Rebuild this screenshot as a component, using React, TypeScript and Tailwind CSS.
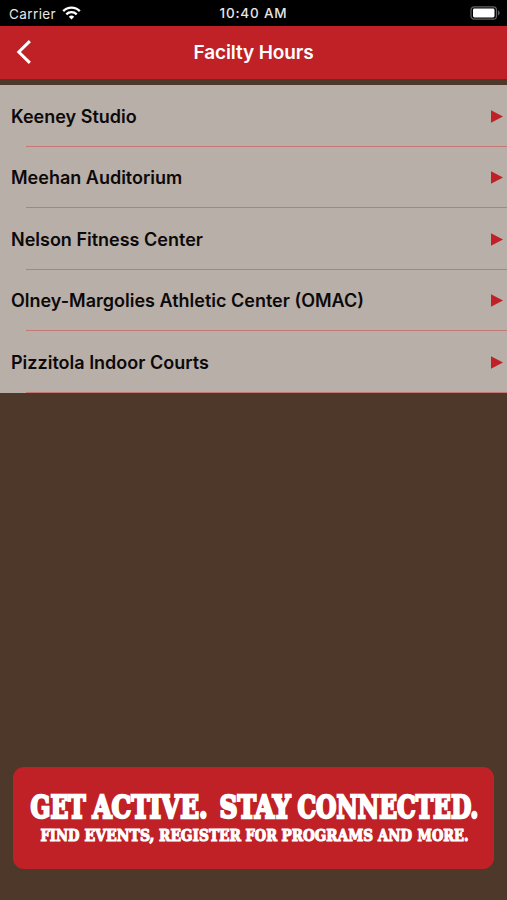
const facilities = [
  "Keeney Studio",
  "Meehan Auditorium",
  "Nelson Fitness Center",
  "Olney-Margolies Athletic Center (OMAC)",
  "Pizzitola Indoor Courts",
];

// each word is fitted to its own width so the slab lettering stays tightly set
const headline = [
  { text: "GET", x: 17.5, width: 55 },
  { text: "ACTIVE.", x: 79.5, width: 115 },
  { text: "STAY", x: 206.5, width: 71 },
  { text: "CONNECTED.", x: 284.5, width: 181 },
];

const tagline = [
  { text: "FIND", x: 27.5, width: 39 },
  { text: "EVENTS,", x: 71.5, width: 70 },
  { text: "REGISTER", x: 146, width: 82 },
  { text: "FOR", x: 232.5, width: 31.5 },
  { text: "PROGRAMS", x: 268.5, width: 91.5 },
  { text: "AND", x: 365, width: 34 },
  { text: "MORE.", x: 404.5, width: 51 },
];

// horizontal squeeze, it also makes the serifs heavier than the stems
const HEADLINE_SQUEEZE = 0.74;
const TAGLINE_SQUEEZE = 0.78;

function StatusBar() {
  return (
    <div className="grid h-[25.5px] grid-cols-3 items-center bg-black text-[13.5px] text-[#e6e6e6]">
      <div className="flex items-center gap-[6px] pl-[9px] pt-[2px]">
        <span className="tracking-[0.4px]">Carrier</span>
        <svg width="19" height="14" viewBox="0 0 19 14" fill="none" stroke="#fff" strokeWidth="2.4" className="-mt-[2px]">
          <path d="M1.2 5.1a11.7 11.7 0 0 1 16.6 0" />
          <path d="M4.3 8.3a7.4 7.4 0 0 1 10.4 0" />
          <path d="M9.5 13.6 6.8 10.7a3.9 3.9 0 0 1 5.4 0Z" fill="#fff" stroke="none" />
        </svg>
      </div>
      <span className="whitespace-nowrap pt-[1px] text-center font-medium tracking-[0.8px]">10:40 AM</span>
      <div className="flex justify-end pr-[6px] pt-[1px]">
        <svg width="31" height="14" viewBox="0 0 31 14">
          <rect x="1" y="0.8" width="25.5" height="12.4" rx="3.2" fill="none" stroke="#626262" strokeWidth="1.2" />
          <rect x="3" y="2.6" width="21.5" height="8.8" rx="1.4" fill="#fff" />
          <path d="M28 4.6c2.2.8 2.2 4 0 4.8Z" fill="#626262" />
        </svg>
      </div>
    </div>
  );
}

function Header() {
  return (
    <header className="grid h-[53.5px] grid-cols-[60px_1fr_60px] items-center bg-[#c02126] text-white">
      <button type="button" aria-label="Back" className="pl-[16px]">
        <svg width="16" height="26" viewBox="0 0 16 26" fill="none" stroke="currentColor" strokeWidth="3" strokeLinecap="square">
          <path d="M12.8 3.2 2.8 13l10 9.8" />
        </svg>
      </button>
      <h1 className="pt-[2px] text-center text-[19px] font-semibold tracking-[-0.1px]">Facilty Hours</h1>
    </header>
  );
}

function FacilityRow({ name }: { name: string }) {
  return (
    <li className="flex h-[61.5px] flex-col">
      <div className="flex flex-1 items-center justify-between pl-[11px] pr-[4px] pt-[2px]">
        <span className="text-[18px] font-semibold text-[#0c0908]">{name}</span>
        <svg width="12" height="13" viewBox="0 0 12 13" fill="#c02126">
          <path d="M0 .3 12 6.5 0 12.7Z" />
        </svg>
      </div>
      <div className="ml-[26px] border-b border-[#c47977]" />
    </li>
  );
}

function Banner() {
  return (
    <div className="mx-[13px] mb-[31px] h-[102px] rounded-[11px] bg-[#c02126]">
      <svg width="482" height="102" viewBox="0 0 482 102" fill="#fff" stroke="#fff" className="block overflow-visible font-['DejaVu_Serif',serif] font-bold">
        <g fontSize="32" strokeWidth="2.5" transform={`scale(${HEADLINE_SQUEEZE} 1)`}>
          {headline.map((word) => (
            <text
              key={word.text}
              x={word.x / HEADLINE_SQUEEZE}
              y="51"
              textLength={word.width / HEADLINE_SQUEEZE}
              lengthAdjust="spacingAndGlyphs"
            >
              {word.text}
            </text>
          ))}
        </g>
        <g fontSize="17" strokeWidth="1.2" transform={`scale(${TAGLINE_SQUEEZE} 1)`}>
          {tagline.map((word) => (
            <text
              key={word.text}
              x={word.x / TAGLINE_SQUEEZE}
              y="74.3"
              textLength={word.width / TAGLINE_SQUEEZE}
              lengthAdjust="spacingAndGlyphs"
            >
              {word.text}
            </text>
          ))}
        </g>
      </svg>
    </div>
  );
}

export default function App() {
  return (
    <div className="flex h-[900px] w-[507px] flex-col overflow-hidden bg-[#4e3829] font-['Inter',sans-serif]">
      <StatusBar />
      <Header />
      <ul className="mt-[6px] bg-[#b8afa9]">
        {facilities.map((name) => (
          <FacilityRow key={name} name={name} />
        ))}
      </ul>
      <div className="flex-1" />
      <Banner />
    </div>
  );
}
